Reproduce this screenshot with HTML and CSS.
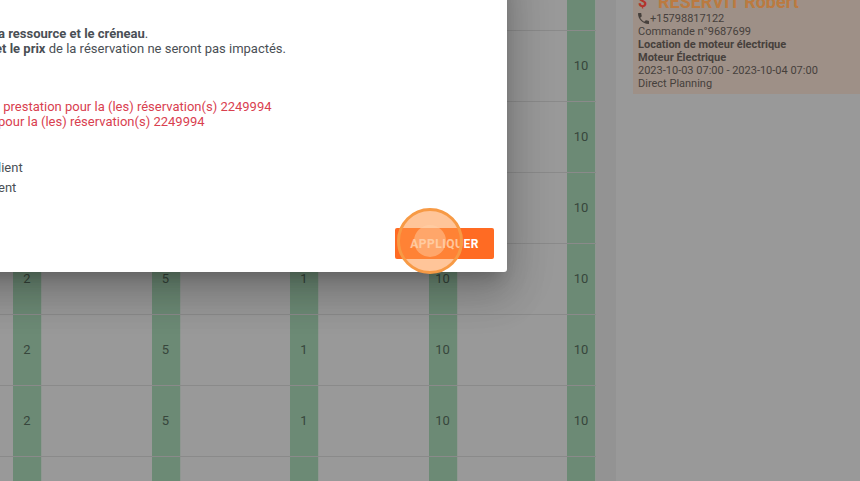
FILE: index.html
```html
<!DOCTYPE html>
<html lang="fr">
<head>
    <meta charset="UTF-8">
    <title>Planning</title>
    <link rel="stylesheet" href="styles.css">
</head>
<body>
    <div class="page">
        <div class="planning">
            <div class="row"><div class="cell"><span>2</span></div><div class="cell"><span>5</span></div><div class="cell"><span>1</span></div><div class="cell"><span>10</span></div><div class="cell"><span>10</span></div></div>
            <div class="row"><div class="cell"><span>2</span></div><div class="cell"><span>5</span></div><div class="cell"><span>1</span></div><div class="cell"><span>10</span></div><div class="cell"><span>10</span></div></div>
            <div class="row"><div class="cell"><span>2</span></div><div class="cell"><span>5</span></div><div class="cell"><span>1</span></div><div class="cell"><span>10</span></div><div class="cell"><span>10</span></div></div>
            <div class="row"><div class="cell"><span>2</span></div><div class="cell"><span>5</span></div><div class="cell"><span>1</span></div><div class="cell"><span>10</span></div><div class="cell"><span>10</span></div></div>
            <div class="row"><div class="cell"><span>2</span></div><div class="cell"><span>5</span></div><div class="cell"><span>1</span></div><div class="cell"><span>10</span></div><div class="cell"><span>10</span></div></div>
            <div class="row"><div class="cell"><span>2</span></div><div class="cell"><span>5</span></div><div class="cell"><span>1</span></div><div class="cell"><span>10</span></div><div class="cell"><span>10</span></div></div>
            <div class="row"><div class="cell"><span>2</span></div><div class="cell"><span>5</span></div><div class="cell"><span>1</span></div><div class="cell"><span>10</span></div><div class="cell"><span>10</span></div></div>
            <div class="row"><div class="cell"><span>2</span></div><div class="cell"><span>5</span></div><div class="cell"><span>1</span></div><div class="cell"><span>10</span></div><div class="cell"><span>10</span></div></div>
        </div>
        <div class="gutter"></div>
        <div class="side">
            <div class="booking">
                <div class="booking-title"><span class="dollar">$</span><span class="booking-name">RESERVIT Robert</span></div>
                <div class="booking-line">
                    <svg class="phone" width="11" height="11" viewBox="3 3 18 18" fill="currentColor">
                        <path d="M6.6 10.8c1.4 2.8 3.8 5.1 6.6 6.6l2.2-2.2c.3-.3.7-.4 1-.2 1.1.4 2.3.6 3.6.6.6 0 1 .4 1 1V20c0 .6-.4 1-1 1C10.6 21 3 13.4 3 4c0-.6.4-1 1-1h3.5c.6 0 1 .4 1 1 0 1.3.2 2.5.6 3.6.1.3 0 .7-.2 1z"/>
                    </svg>+15798817122
                </div>
                <div class="booking-line">Commande n°9687699</div>
                <div class="booking-line booking-strong">Location de moteur électrique</div>
                <div class="booking-line booking-strong">Moteur Électrique</div>
                <div class="booking-line">2023-10-03 07:00 - 2023-10-04 07:00</div>
                <div class="booking-line">Direct Planning</div>
            </div>
        </div>
    </div>

    <div class="modal">
        <div class="modal-intro">
            <div class="modal-line"><span class="lead lead-mid">Vous allez modifier l</span><strong>a ressource et le créneau</strong>.</div>
            <div class="modal-line"><span class="lead"><strong>La prestation, la durée </strong></span><strong>et le prix</strong> de la réservation ne seront pas impactés.</div>
        </div>
        <div class="modal-errors">
            <div class="modal-line"><span class="lead lead-wide">Impossible de modifier la</span> prestation pour la (les) réservation(s) 2249994</div>
            <div class="modal-line"><span class="lead lead-mid">Impossible de modifier le prix </span>pour la (les) réservation(s) 2249994</div>
        </div>
        <div class="modal-options">
            <div class="modal-option"><span class="lead lead-mid">Envoyer un e-mail au c</span>lient</div>
            <div class="modal-option"><span class="lead lead-mid">Envoyer un SMS au cli</span>ent</div>
        </div>
        <div class="modal-footer">
            <button class="apply-button">APPLIQUER</button>
        </div>
    </div>

    <div class="spotlight"><div class="spotlight-dot"></div></div>
</body>
</html>
```

FILE: styles.css
```css
* {
    margin: 0;
    padding: 0;
    box-sizing: border-box;
}

body {
    font-family: Roboto, 'Liberation Sans', sans-serif;
    background: #999;
    width: 860px;
    height: 481px;
    overflow: hidden;
    position: relative;
}

.page {
    display: flex;
    height: 481px;
    overflow: hidden;
}

.planning {
    width: 596px;
    flex-shrink: 0;
    margin-top: -40px;
}

.row {
    display: grid;
    grid-template-columns: repeat(5, 138.5px);
    height: 71px;
    padding-left: 13px;
    border-bottom: 1px solid #8a8a8a;
}

.cell span {
    display: flex;
    align-items: center;
    justify-content: center;
    width: 28px;
    height: 70px;
    padding-bottom: 2px;
    background: #6c8a75;
    box-shadow: 1px 0 0 #8f9791;
    color: #37463c;
    font-size: 13px;
}

.gutter {
    width: 20px;
    flex-shrink: 0;
    background: #939393;
}

.side {
    flex: 1;
    padding-left: 17px;
}

.booking {
    margin-top: -12px;
    height: 106px;
    padding: 3px 0 0 5px;
    background: #9e9087;
    color: #46403c;
    font-size: 11px;
    line-height: 13px;
}

.booking-title {
    display: flex;
    align-items: center;
    height: 21px;
    font-size: 18px;
    font-weight: 700;
}

.dollar {
    width: 20px;
    color: #b3332b;
    font-size: 16px;
}

.booking-name {
    color: #bb7a40;
}

.booking-strong {
    font-weight: 700;
}

.phone {
    vertical-align: -2px;
    margin-right: 1px;
}

.modal {
    position: absolute;
    top: -40px;
    left: -200px;
    width: 707px;
    padding: 66px 13px 13px 0;
    background: #fff;
    border-radius: 3px;
    box-shadow: 0 11px 15px -7px rgba(0, 0, 0, .2), 0 24px 38px 3px rgba(0, 0, 0, .14), 0 9px 46px 8px rgba(0, 0, 0, .12);
    color: #4a4f55;
    font-size: 13px;
    white-space: nowrap;
}

.modal-line {
    height: 15px;
    line-height: 15px;
}

.lead {
    display: inline-block;
    width: 195px;
    text-align: right;
}

.lead-wide {
    width: 200px;
}

.lead-mid {
    width: 198px;
}

.modal-errors {
    margin-top: 43px;
    color: #d9404f;
}

.modal-options {
    margin-top: 29px;
}

.modal-option {
    height: 20px;
    line-height: 20px;
}

.modal-footer {
    display: flex;
    justify-content: flex-end;
    margin-top: 30px;
}

.apply-button {
    width: 99px;
    height: 31px;
    border: none;
    border-radius: 2px;
    background: #ff6b23;
    color: #fff;
    font-family: inherit;
    font-size: 12px;
    font-weight: 700;
    letter-spacing: .5px;
}

.spotlight {
    position: absolute;
    left: 397px;
    top: 208px;
    width: 66px;
    height: 66px;
    display: flex;
    align-items: center;
    justify-content: center;
    border: 3px solid #f79a45;
    border-radius: 50%;
    background: rgba(255, 150, 70, .55);
}

.spotlight-dot {
    width: 32px;
    height: 32px;
    border-radius: 50%;
    background: rgba(255, 210, 170, .45);
}
```
